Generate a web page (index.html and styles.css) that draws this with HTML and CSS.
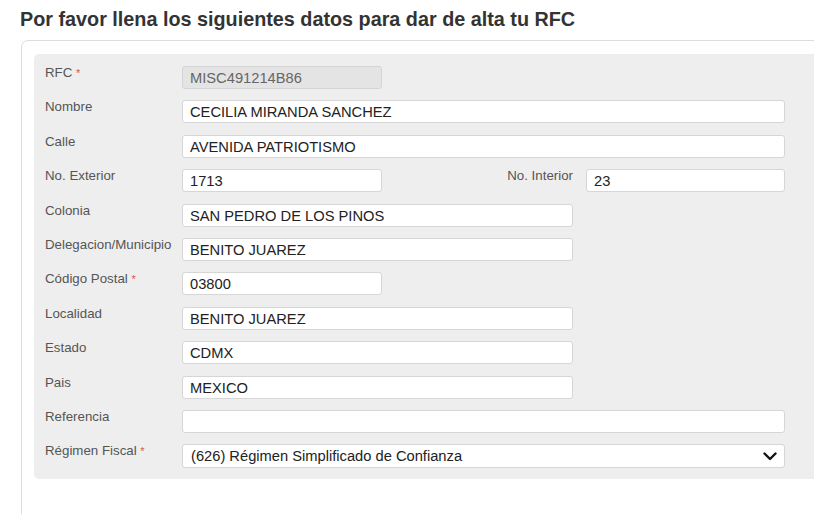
FILE: index.html
```html
<!DOCTYPE html>
<html lang="es">
<head>
<meta charset="utf-8">
<title>Alta RFC</title>
<link rel="stylesheet" href="styles.css">
</head>
<body>
<div class="page">
  <h3 class="title">Por favor llena los siguientes datos para dar de alta tu RFC</h3>
  <div class="box">
    <div class="panel">
      <div class="row">
        <label class="lbl">RFC <span class="req">*</span></label>
        <div class="field w-short"><input class="inp inp-disabled" type="text" value="MISC491214B86" disabled></div>
      </div>
      <div class="row">
        <label class="lbl">Nombre</label>
        <div class="field w-full"><input class="inp" type="text" value="CECILIA MIRANDA SANCHEZ"></div>
      </div>
      <div class="row">
        <label class="lbl">Calle</label>
        <div class="field w-full"><input class="inp" type="text" value="AVENIDA PATRIOTISMO"></div>
      </div>
      <div class="row">
        <label class="lbl">No. Exterior</label>
        <div class="field w-short"><input class="inp" type="text" value="1713"></div>
        <label class="lbl lbl-right">No. Interior</label>
        <div class="field w-int"><input class="inp" type="text" value="23"></div>
      </div>
      <div class="row">
        <label class="lbl">Colonia</label>
        <div class="field w-mid"><input class="inp" type="text" value="SAN PEDRO DE LOS PINOS"></div>
      </div>
      <div class="row">
        <label class="lbl">Delegacion/Municipio</label>
        <div class="field w-mid"><input class="inp" type="text" value="BENITO JUAREZ"></div>
      </div>
      <div class="row">
        <label class="lbl">Código Postal <span class="req">*</span></label>
        <div class="field w-short"><input class="inp" type="text" value="03800"></div>
      </div>
      <div class="row">
        <label class="lbl">Localidad</label>
        <div class="field w-mid"><input class="inp" type="text" value="BENITO JUAREZ"></div>
      </div>
      <div class="row">
        <label class="lbl">Estado</label>
        <div class="field w-mid"><input class="inp" type="text" value="CDMX"></div>
      </div>
      <div class="row">
        <label class="lbl">Pais</label>
        <div class="field w-mid"><input class="inp" type="text" value="MEXICO"></div>
      </div>
      <div class="row">
        <label class="lbl">Referencia</label>
        <div class="field w-full"><input class="inp" type="text" value=""></div>
      </div>
      <div class="row row-last">
        <label class="lbl">Régimen Fiscal <span class="req">*</span></label>
        <div class="field w-full">
          <div class="select">
            <span class="select-text">(626) Régimen Simplificado de Confianza</span>
            <svg class="chev" width="14" height="9" viewBox="0 0 14 9"><path d="M1.5 1.5 L7 7 L12.5 1.5" fill="none" stroke="#111" stroke-width="2.4" stroke-linecap="round" stroke-linejoin="round"/></svg>
          </div>
        </div>
      </div>
    </div>
  </div>
</div>
</body>
</html>
```

FILE: styles.css
```css
html, body {
  margin: 0;
  padding: 0;
  background: #ffffff;
  overflow: hidden;
}
body {
  font-family: "Liberation Sans", Arial, sans-serif;
  width: 814px;
  height: 514px;
}
.page {
  padding: 0 0 0 20px;
  width: 840px;
}
.title {
  margin: 0;
  padding-top: 9px;
  height: 31px;
  box-sizing: border-box;
  font-size: 19.8px;
  line-height: 20px;
  font-weight: bold;
  color: #333333;
}
.box {
  border: 1px solid #dddddd;
  border-radius: 7px;
  padding: 13px 12px 40px 12px;
  height: 520px;
  box-sizing: border-box;
  margin-top: 9px;
  margin-left: 1px;
}
.panel {
  background: #eeeeee;
  border-radius: 5px;
  padding: 12px 0 11px 11px;
}
.row {
  display: flex;
  align-items: flex-start;
  margin-bottom: 11.4px;
}
.row-last {
  margin-bottom: 0;
}
.lbl {
  width: 137px;
  flex: none;
  font-size: 13.3px;
  line-height: 14px;
  padding-top: 0;
  color: #555555;
  white-space: nowrap;
}
.lbl-right {
  width: 191px;
  text-align: right;
}
.req {
  color: #d9534f;
  font-size: 11px;
}
.field {
  flex: none;
}
.w-full { width: 603px; }
.w-short { width: 200px; }
.w-mid { width: 391px; }
.w-int { width: 199px; margin-left: 13px; }
.inp {
  display: block;
  width: 100%;
  height: 23px;
  box-sizing: border-box;
  border: 1px solid #d6d6d6;
  border-radius: 3px;
  background: #ffffff;
  padding: 1px 7px 0 7px;
  font-family: "Liberation Sans", Arial, sans-serif;
  font-size: 14.7px;
  color: #222222;
  outline: none;
}
.inp-disabled {
  background: #e4e4e4;
  color: #666666;
  border-color: #d4d4d4;
}
.select {
  display: flex;
  align-items: center;
  justify-content: space-between;
  height: 24px;
  box-sizing: border-box;
  border: 1px solid #d6d6d6;
  border-radius: 3px;
  background: #ffffff;
  padding: 0 7px 0 8px;
  font-size: 14.7px;
  color: #222222;
}
.chev {
  display: block;
}
```
